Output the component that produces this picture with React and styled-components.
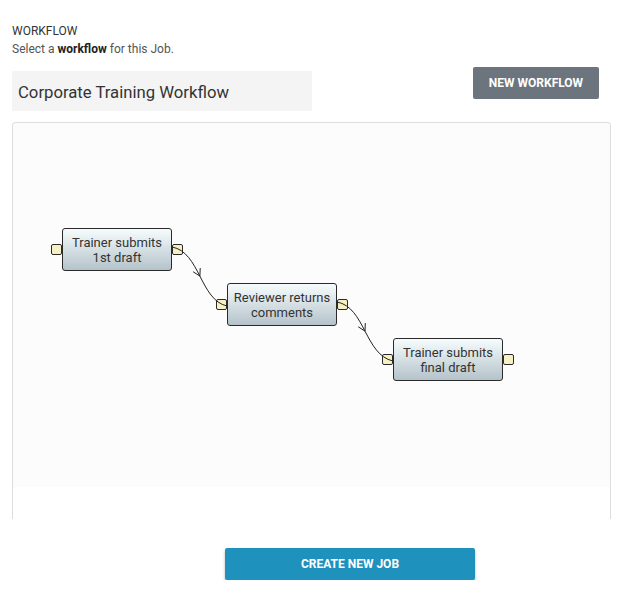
import styled, { createGlobalStyle } from "styled-components";

const GlobalStyle = createGlobalStyle`
  body {
    margin: 0;
    background: #fff;
    font-family: Roboto, "Liberation Sans", sans-serif;
    color: #333;
  }
`;

const nodes = [
  { id: 1, x: 49, y: 105, lines: ["Trainer submits", "1st draft"] },
  { id: 2, x: 214, y: 160, lines: ["Reviewer returns", "comments"] },
  { id: 3, x: 380, y: 215, lines: ["Trainer submits", "final draft"] },
];

const links = [
  [[159, 124], [187, 129], [187, 177], [214, 183]],
  [[324, 179], [352, 184], [352, 232], [380, 238]],
];

// midpoint + tangent of a cubic, for the open arrowhead
const arrowAt = ([p0, p1, p2, p3]) => {
  const mx = (p0[0] + 3 * p1[0] + 3 * p2[0] + p3[0]) / 8;
  const my = (p0[1] + 3 * p1[1] + 3 * p2[1] + p3[1]) / 8;
  let dx = p3[0] + p2[0] - p1[0] - p0[0];
  let dy = p3[1] + p2[1] - p1[1] - p0[1];
  const len = Math.hypot(dx, dy);
  dx /= len;
  dy /= len;
  const back = 7;
  const wing = 4;
  const bx = mx - dx * back;
  const by = my - dy * back;
  return `M${bx - dy * wing},${by + dx * wing} L${mx},${my} L${bx + dy * wing},${by - dx * wing}`;
};

const App = () => {
  return (
    <Page>
      <GlobalStyle />
      <Label>WORKFLOW</Label>
      <Hint>
        Select a <b>workflow</b> for this Job.
      </Hint>
      <HeaderRow>
        <Field>
          <FieldText>Corporate Training Workflow</FieldText>
        </Field>
        <GreyButton>NEW WORKFLOW</GreyButton>
      </HeaderRow>
      <CanvasBox>
        <Diagram>
          {nodes.map((n) => (
            <Node key={n.id} style={{ left: n.x, top: n.y }}>
              <Port $side="left" />
              {n.lines.map((l) => (
                <div key={l}>{l}</div>
              ))}
              <Port $side="right" />
            </Node>
          ))}
          <Links width="597" height="364">
            {links.map((p, i) => (
              <g key={i} fill="none" stroke="#222" strokeWidth="1">
                <path
                  d={`M${p[0][0]},${p[0][1]} C${p[1][0]},${p[1][1]} ${p[2][0]},${p[2][1]} ${p[3][0]},${p[3][1]}`}
                />
                <path d={arrowAt(p)} />
              </g>
            ))}
          </Links>
        </Diagram>
      </CanvasBox>
      <Footer>
        <BlueButton>CREATE NEW JOB</BlueButton>
      </Footer>
    </Page>
  );
};

const Page = styled.div`
  padding: 24px 30px 0 12px;
  width: 599px;
`;

const Label = styled.div`
  font-size: 12px;
  line-height: 14px;
  color: #333;
`;

const Hint = styled.div`
  margin-top: 4px;
  font-size: 12px;
  line-height: 14px;
  color: #555;
  b {
    font-weight: 700;
    color: #222;
  }
`;

const HeaderRow = styled.div`
  display: flex;
  justify-content: space-between;
  align-items: flex-start;
  margin-top: 11px;
`;

const Field = styled.div`
  width: 294px;
  height: 29px;
  margin-top: 4px;
  padding: 11px 0 0 6px;
  background: #f4f4f4;
  box-sizing: content-box;
`;

const FieldText = styled.div`
  height: 19px;
  overflow: hidden;
  font-size: 16.7px;
  line-height: 22px;
  color: #333;
`;

const GreyButton = styled.button`
  width: 126px;
  height: 32px;
  margin-right: 12px;
  border: none;
  border-radius: 2px;
  background: #6c747d;
  color: #fff;
  font-family: Roboto, "Liberation Sans", sans-serif;
  font-size: 12px;
  font-weight: 700;
  padding: 0;
`;

const CanvasBox = styled.div`
  margin-top: 11px;
  height: 396px;
  border: 1px solid #ddd;
  border-bottom: none;
  border-radius: 4px 4px 0 0;
`;

const Diagram = styled.div`
  position: relative;
  height: 364px;
  background: #fcfcfc;
  border-radius: 4px 4px 0 0;
`;

const Node = styled.div`
  position: absolute;
  width: 110px;
  height: 43px;
  box-sizing: border-box;
  border: 1px solid #2a2a2a;
  border-radius: 3px;
  background: linear-gradient(#f6fcfd, #b4c3ca);
  display: flex;
  flex-direction: column;
  justify-content: center;
  align-items: center;
  font-size: 13px;
  line-height: 15px;
  color: #333;
  white-space: nowrap;
`;

const Port = styled.span`
  position: absolute;
  top: 15px;
  ${(p) => (p.$side === "left" ? "left: -12px;" : "right: -12px;")}
  width: 11px;
  height: 11px;
  box-sizing: border-box;
  border: 1px solid #2a2a2a;
  border-radius: 2px;
  background: #f6f0c2;
`;

const Links = styled.svg`
  position: absolute;
  left: 0;
  top: 0;
  pointer-events: none;
`;

const Footer = styled.div`
  display: flex;
  padding-left: 213px;
  margin-top: 29px;
`;

const BlueButton = styled.button`
  width: 250px;
  height: 32px;
  border: none;
  border-radius: 2px;
  background: #1f91bd;
  color: #fff;
  font-family: Roboto, "Liberation Sans", sans-serif;
  font-size: 12px;
  font-weight: 700;
  padding: 0;
  box-shadow: 0 2px 3px rgba(0, 0, 0, 0.3);
`;

export default App;
